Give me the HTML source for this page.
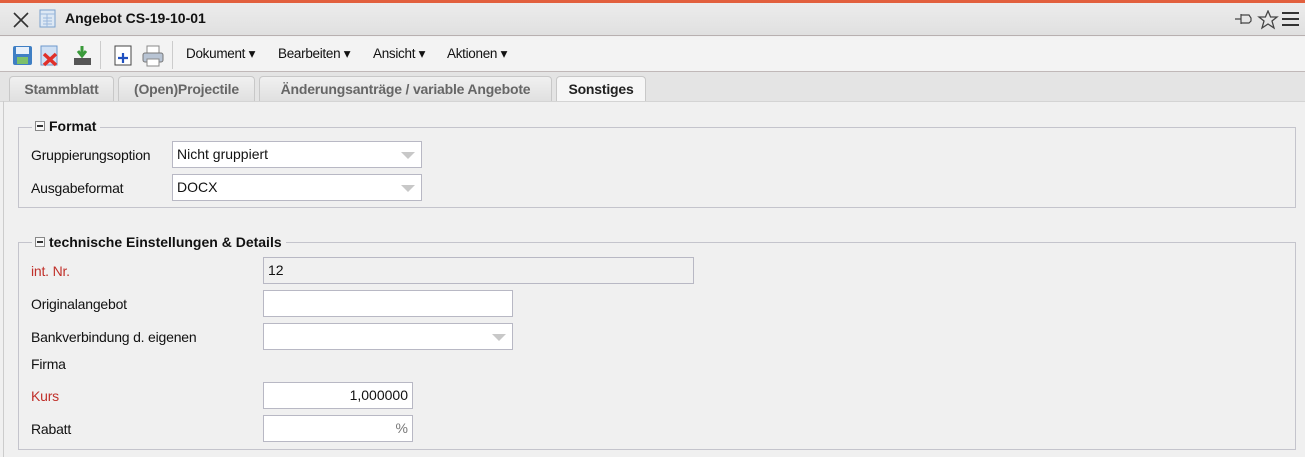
<!DOCTYPE html>
<html><head><meta charset="utf-8"><style>
*{box-sizing:border-box;margin:0;padding:0}
body{width:1305px;height:457px;overflow:hidden;background:#f0f0f0;font-family:"Liberation Sans",sans-serif;font-size:14px;color:#111;position:relative}
.a{position:absolute}
.top{left:0;top:0;width:1305px;height:3px;background:#e2603e}
.title{left:0;top:3px;width:1305px;height:33px;background:linear-gradient(#ececec,#e0e0e0);border-bottom:1px solid #b8b0b0}
.tb{left:0;top:37px;width:1305px;height:35px;background:#f3f3f3;border-bottom:1px solid #c0b8b8}
.tabs{left:0;top:72px;width:1305px;height:29px;background:#e4e4e4}
.tab{position:absolute;top:76px;height:25px;background:linear-gradient(#f0f0f0,#e0e0e0);border:1px solid #c8c8c8;border-bottom:none;border-radius:4px 4px 0 0;font-weight:bold;color:#666;font-size:14px;text-align:center;line-height:24px;letter-spacing:-0.2px}
.tab.on{background:#f6f6f6;color:#222;height:26px}
.menu{top:46px;font-size:13.5px;color:#111;letter-spacing:-0.3px}
.fs{border:1px solid #c4c4cc}
.leg{background:#f0f0f0;font-weight:bold;padding:0 4px 0 3px;font-size:14px}
.mn{display:inline-block;width:10px;height:10px;border:1px solid #888;vertical-align:0;margin-right:4px;position:relative;background:#f8f8f8}
.mn:after{content:"";position:absolute;left:1px;top:3px;width:6px;height:2px;background:#333}
.inp{background:#fff;border:1px solid #b8b8c4;height:27px;line-height:25px;padding:0 4px}
.sel:after{content:"";position:absolute;right:6px;top:10px;border-left:7px solid transparent;border-right:7px solid transparent;border-top:7px solid #c8c8c8}
.lbl{font-size:14px;letter-spacing:-0.2px}
.red{color:#c0302a}
</style></head><body>
<div class="a top"></div>
<div class="a title"></div>
<svg class="a" style="left:12px;top:11px" width="18" height="18"><path d="M2 2L16 16M16 2L2 16" stroke="#333" stroke-width="1.6"/></svg>
<svg class="a" style="left:39px;top:9px" width="18" height="20"><rect x="1" y="1" width="15" height="17" fill="#dde8f4" stroke="#7aa0cc"/><path d="M1 5H16M4 9H13M4 12H13M4 15H13M8 5V18" stroke="#9bb8dc"/></svg>
<div class="a" style="left:65px;top:10px;font-weight:bold;font-size:14px">Angebot CS-19-10-01</div>
<svg class="a" style="left:1233px;top:10px" width="70" height="20"><path d="M2 9H8M8 4V14M8 5H16L18 8V11L16 13H8" fill="none" stroke="#444" stroke-width="1.2"/><path d="M35 1L37.6 7H44L39 11L41 18L35 14L29 18L31 11L26 7H32.4Z" fill="none" stroke="#444" stroke-width="1.3"/><path d="M49 3H66M49 9H66M49 15H66" stroke="#333" stroke-width="2"/></svg>
<div class="a tb"></div>
<svg class="a" style="left:12px;top:45px" width="160" height="22">
<rect x="1" y="1" width="19" height="19" rx="2" fill="#3f7fc4"/><rect x="4" y="2" width="13" height="7" fill="#e8f0fa"/><rect x="5" y="12" width="11" height="7" fill="#7dc06a"/>
<rect x="29" y="1" width="16" height="19" fill="#cfe0f4" stroke="#6e98cc"/><path d="M32 9L44 20M44 9L32 20" stroke="#e0302a" stroke-width="3.5"/>
<path d="M70 1V9M66 6L70 11L74 6" stroke="#3a9a3a" stroke-width="3" fill="none"/><rect x="62" y="13" width="17" height="7" fill="#555"/>
<rect x="103" y="1" width="16" height="19" fill="#fff" stroke="#444"/><path d="M111 8V18M106 13H116" stroke="#2050c0" stroke-width="2.2"/>
<rect x="135" y="1" width="12" height="8" fill="#fff" stroke="#888"/><rect x="131" y="8" width="20" height="9" rx="2" fill="#b8c4d4" stroke="#777"/><rect x="135" y="14" width="12" height="7" fill="#fff" stroke="#888"/>
</svg>
<div class="a" style="left:100px;top:41px;width:1px;height:28px;background:#ccc"></div>
<div class="a" style="left:172px;top:41px;width:1px;height:28px;background:#ccc"></div>
<div class="a menu" style="left:186px">Dokument ▾</div>
<div class="a menu" style="left:278px">Bearbeiten ▾</div>
<div class="a menu" style="left:373px">Ansicht ▾</div>
<div class="a menu" style="left:447px">Aktionen ▾</div>
<div class="a tabs"></div>
<div class="tab" style="left:9px;width:105px">Stammblatt</div>
<div class="tab" style="left:118px;width:137px">(Open)Projectile</div>
<div class="tab" style="left:259px;width:293px">Änderungsanträge / variable Angebote</div>
<div class="tab on" style="left:556px;width:90px">Sonstiges</div>
<div class="a" style="left:0;top:101px;width:1305px;height:1px;background:#d4d4d4"></div>
<div class="a" style="left:3px;top:101px;width:1px;height:356px;background:#ccc"></div>

<div class="a fs" style="left:18px;top:127px;width:1278px;height:81px"></div>
<div class="a leg" style="left:32px;top:118px"><span class="mn"></span>Format</div>
<div class="a lbl" style="left:31px;top:147px">Gruppierungsoption</div>
<div class="a inp sel" style="left:172px;top:141px;width:250px">Nicht gruppiert</div>
<div class="a lbl" style="left:31px;top:180px">Ausgabeformat</div>
<div class="a inp sel" style="left:172px;top:174px;width:250px">DOCX</div>

<div class="a fs" style="left:18px;top:242px;width:1278px;height:208px"></div>
<div class="a leg" style="left:32px;top:234px"><span class="mn"></span>technische Einstellungen &amp; Details</div>
<div class="a lbl red" style="left:31px;top:263px">int. Nr.</div>
<div class="a inp" style="left:263px;top:257px;width:431px;background:#f0f0f0">12</div>
<div class="a lbl" style="left:31px;top:296px">Originalangebot</div>
<div class="a inp" style="left:263px;top:290px;width:250px"></div>
<div class="a lbl" style="left:31px;top:329px">Bankverbindung d. eigenen</div>
<div class="a inp sel" style="left:263px;top:323px;width:250px"></div>
<div class="a lbl" style="left:31px;top:356px">Firma</div>
<div class="a lbl red" style="left:31px;top:388px">Kurs</div>
<div class="a inp" style="left:263px;top:382px;width:150px;text-align:right">1,000000</div>
<div class="a lbl" style="left:31px;top:421px">Rabatt</div>
<div class="a inp" style="left:263px;top:415px;width:150px;text-align:right;color:#777">%</div>
</body></html>
